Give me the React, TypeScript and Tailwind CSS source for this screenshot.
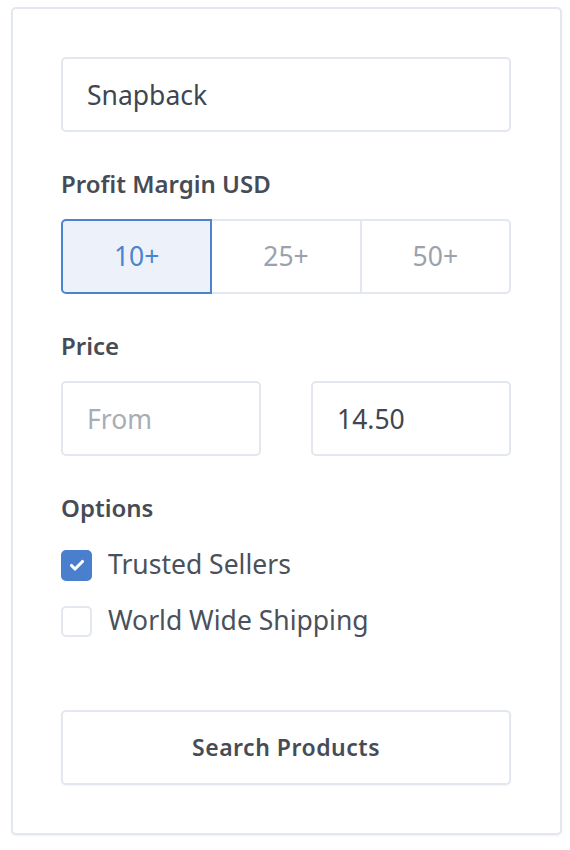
import { useState } from 'react';

export default function App() {
  const [margin, setMargin] = useState('10+');
  const [trusted, setTrusted] = useState(true);
  const [worldwide, setWorldwide] = useState(false);

  const margins = ['10+', '25+', '50+'];

  return (
    <div className="min-h-[850px] bg-white pt-[7px] pl-[11px]" style={{ fontFamily: '"Noto Sans", "Open Sans", sans-serif' }}>
      <div className="w-[551px] h-[828px] rounded-[5px] border-2 border-[#e3e7ee] bg-white px-[48px] pt-[48px] shadow-[0_1px_2px_rgba(0,0,0,0.06)]">
        <input
          defaultValue="Snapback"
          className="block w-[450px] h-[75px] rounded-[5px] border-2 border-[#e3e7ee] px-[24px] text-[26.5px] text-[#3f4650] outline-none"
        />

        <div className="mt-[36px] text-[24px] font-semibold text-[#464c55] leading-[32px]">Profit Margin USD</div>
        <div className="mt-[19px] flex w-[450px] h-[75px]">
          {margins.map((m, i) => {
            const active = m === margin;
            return (
              <button
                key={m}
                onClick={() => setMargin(m)}
                className={
                  'flex-1 text-[26.5px] border-2 ' +
                  (i === 0 ? 'rounded-l-[5px] ' : '') +
                  (i === 2 ? 'rounded-r-[5px] ' : '') +
                  (i > 0 ? '-ml-[2px] ' : '') +
                  (active
                    ? 'relative z-10 bg-[#edf2fa] border-[#4a84d0] text-[#4a84d0]'
                    : 'bg-white border-[#e3e7ee] text-[#9aa2ae]')
                }
              >
                {m}
              </button>
            );
          })}
        </div>

        <div className="mt-[36px] text-[24px] font-semibold text-[#464c55] leading-[32px]">Price</div>
        <div className="mt-[19px] flex gap-[50px] w-[450px]">
          <input
            placeholder="From"
            className="block w-[200px] h-[75px] rounded-[5px] border-2 border-[#e3e7ee] px-[24px] text-[26.5px] text-[#3f4650] placeholder:text-[#a6adb7] outline-none"
          />
          <input
            defaultValue="14.50"
            className="block w-[200px] h-[75px] rounded-[5px] border-2 border-[#e3e7ee] px-[24px] text-[26.5px] text-[#3f4650] outline-none"
          />
        </div>

        <div className="mt-[36px] text-[24px] font-semibold text-[#464c55] leading-[32px]">Options</div>
        <div className="mt-[25px] flex flex-col gap-[24px]">
          <label className="flex items-center gap-[16px] h-[32px] cursor-pointer" onClick={() => setTrusted(!trusted)}>
            <span
              className={
                'flex items-center justify-center w-[31px] h-[31px] rounded-[5px] border-2 ' +
                (trusted ? 'bg-[#4a7fce] border-[#4a7fce]' : 'bg-white border-[#e3e7ee]')
              }
            >
              {trusted && (
                <svg width="20" height="20" viewBox="0 0 16 16">
                  <path d="M3.6 8.4l2.8 2.8L12.4 5.2" fill="none" stroke="white" strokeWidth="2.5" strokeLinecap="round" strokeLinejoin="round" />
                </svg>
              )}
            </span>
            <span className="text-[26.5px] text-[#4a515b]">Trusted Sellers</span>
          </label>
          <label className="flex items-center gap-[16px] h-[32px] cursor-pointer" onClick={() => setWorldwide(!worldwide)}>
            <span
              className={
                'flex items-center justify-center w-[31px] h-[31px] rounded-[5px] border-2 ' +
                (worldwide ? 'bg-[#4a7fce] border-[#4a7fce]' : 'bg-white border-[#e3e7ee]')
              }
            >
              {worldwide && (
                <svg width="20" height="20" viewBox="0 0 16 16">
                  <path d="M3.6 8.4l2.8 2.8L12.4 5.2" fill="none" stroke="white" strokeWidth="2.5" strokeLinecap="round" strokeLinejoin="round" />
                </svg>
              )}
            </span>
            <span className="text-[26.5px] text-[#4a515b]">World Wide Shipping</span>
          </label>
        </div>

        <button className="mt-[73px] block w-[450px] h-[75px] rounded-[5px] border-2 border-[#e3e7ee] bg-white text-[23px] font-semibold tracking-[0.5px] text-[#464c55] shadow-[0_1px_2px_rgba(0,0,0,0.05)]">
          Search Products
        </button>
      </div>
    </div>
  );
}
